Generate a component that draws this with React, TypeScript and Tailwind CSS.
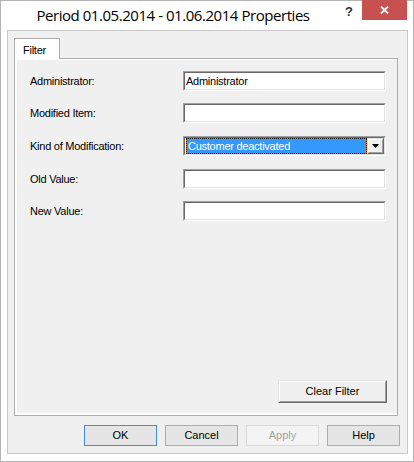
import React from 'react';

const ui = { fontFamily: '"Liberation Sans", Arial, sans-serif' };

const rows: { label: string; value?: string; combo?: boolean; gap: string }[] = [
  { label: 'Administrator:', value: 'Administrator', gap: 'mt-0' },
  { label: 'Modified Item:', gap: 'mt-[12px]' },
  { label: 'Kind of Modification:', value: 'Customer deactivated', combo: true, gap: 'mt-[13px]' },
  { label: 'Old Value:', gap: 'mt-[13px]' },
  { label: 'New Value:', gap: 'mt-[12px]' },
];

const Sunken: React.FC<{ children?: React.ReactNode }> = ({ children }) => (
  <div className="w-[203px] h-[20px] border border-t-[#a0a0a0] border-l-[#a0a0a0] border-r-white border-b-white">
    <div className="h-full border border-t-[#696969] border-l-[#696969] border-r-[#e3e3e3] border-b-[#e3e3e3] bg-white flex items-stretch">
      {children}
    </div>
  </div>
);

const Raised: React.FC<{ className?: string; children?: React.ReactNode }> = ({ className, children }) => (
  <div className={`border border-t-[#e3e3e3] border-l-[#e3e3e3] border-r-[#696969] border-b-[#696969] ${className ?? ''}`}>
    <div className="h-full border border-t-white border-l-white border-r-[#a0a0a0] border-b-[#a0a0a0] bg-[#f0f0f0] flex items-center justify-center">
      {children}
    </div>
  </div>
);

const DialogButton: React.FC<{ label: string; kind?: 'default' | 'disabled' }> = ({ label, kind }) => {
  const look =
    kind === 'default'
      ? 'border-[#3c8fe3] bg-[#e5e5e5] text-black'
      : kind === 'disabled'
      ? 'border-[#d9d9d9] bg-[#f4f4f4] text-[#a3a3a3]'
      : 'border-[#acacac] bg-[#e5e5e5] text-black';
  return (
    <div className={`w-[73px] h-[21px] border flex items-center justify-center text-[11px] ${look}`}>{label}</div>
  );
};

export default function App() {
  return (
    <div style={ui} className="w-[414px] h-[462px] bg-white border border-[#b4b4b4] flex flex-col">
      {/* title bar */}
      <div className="h-[29px] flex items-start shrink-0">
        <div
          className="w-[344px] pt-[4px] text-center text-[15px] tracking-[-0.45px] text-black leading-[20px]"
          style={{ fontFamily: '"Open Sans", "Noto Sans", sans-serif' }}
        >
          Period 01.05.2014 - 01.06.2014 Properties
        </div>
        <div className="w-[17px] pt-[3px] text-[13px] font-bold text-[#333] leading-[16px]">?</div>
        <div className="w-[45px] h-[20px] -mt-[1px] bg-[#c75050] flex items-center justify-center">
          <svg width="9" height="8" viewBox="0 0 9 8">
            <path d="M1 0.5 L8 7.5 M8 0.5 L1 7.5" stroke="white" strokeWidth="1.8" />
          </svg>
        </div>
      </div>

      {/* client area */}
      <div className="ml-[6px] w-[401px] h-[424px] border border-[#c8c8c8] bg-[#f0f0f0] flex flex-col">
        <div className="pl-[6px] pt-[7px]">
          <div className="relative z-10 w-[46px] h-[21px] -mb-[1px] border border-b-0 border-[#adadad] bg-white text-[11px] tracking-[-0.25px] pl-[8px] pt-[3px]">
            Filter
          </div>
          <div className="w-[384px] h-[358px] border border-[#adadad] bg-white pt-[1px] pl-[2px] pb-[2px] flex">
            <div className="flex-1 bg-[#f0f0f0] flex flex-col pl-[13px] pt-[11px]">
              {rows.map((r) => (
                <div key={r.label} className={`flex items-center h-[20px] ${r.gap}`}>
                  <div className="w-[153px] text-[11px] tracking-[-0.25px] text-black">{r.label}</div>
                  <Sunken>
                    {r.combo ? (
                      <>
                        <div className="flex-1 pl-[1px] flex">
                          <div className="flex-1 border border-dotted border-black bg-[#d97a00] flex">
                            <div className="flex-1 bg-[#3399ff] text-white text-[11px] tracking-[-0.25px] leading-[14px] pl-[1px]">
                              {r.value}
                            </div>
                          </div>
                        </div>
                        <Raised className="w-[17px] h-[16px]">
                          <svg width="7" height="4" viewBox="0 0 7 4">
                            <path d="M0 0 H7 L3.5 4 Z" fill="black" />
                          </svg>
                        </Raised>
                      </>
                    ) : (
                      <div className="flex-1 flex items-center pl-[1px] text-[11px] tracking-[-0.25px] text-black">{r.value}</div>
                    )}
                  </Sunken>
                </div>
              ))}
              <Raised className="mt-auto self-end w-[109px] h-[23px] mr-[10px] mb-[10px]">
                <span className="text-[11px] text-black">Clear Filter</span>
              </Raised>
            </div>
          </div>
        </div>

        {/* dialog buttons */}
        <div className="mt-[9px] flex justify-end gap-[8px] pr-[7px]">
          <DialogButton label="OK" kind="default" />
          <DialogButton label="Cancel" />
          <DialogButton label="Apply" kind="disabled" />
          <DialogButton label="Help" />
        </div>
      </div>
    </div>
  );
}
